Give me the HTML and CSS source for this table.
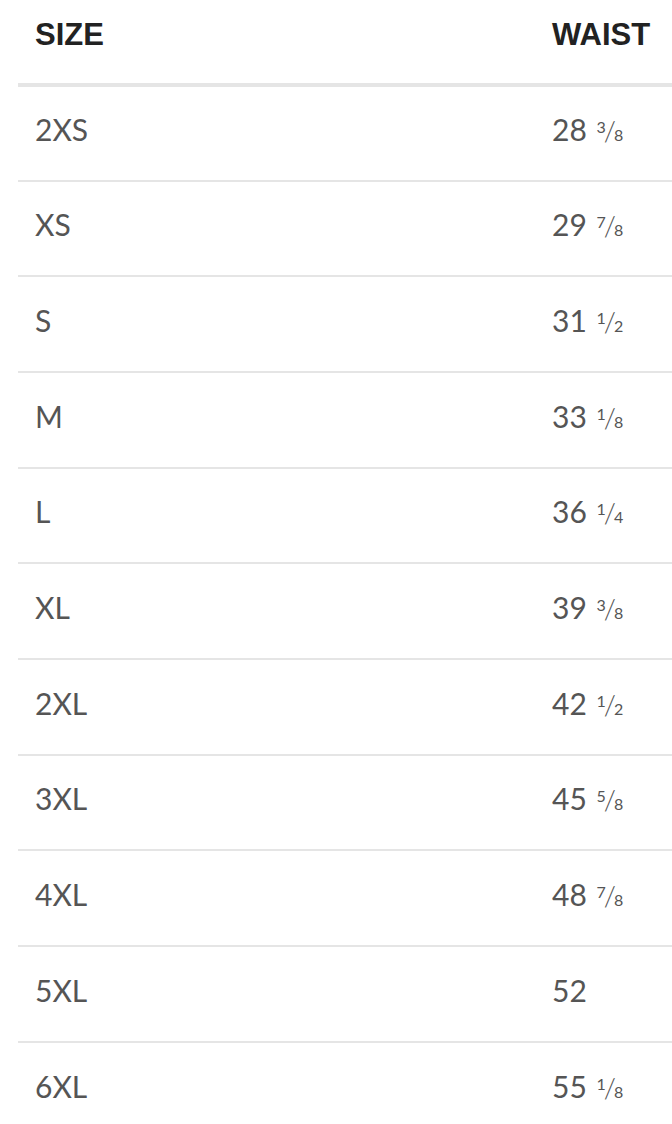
FILE: index.html
```html
<!DOCTYPE html>
<html lang="en">
<head>
    <meta charset="UTF-8">
    <meta name="viewport" content="width=device-width, initial-scale=1.0">
    <title>Size Chart</title>
    <link rel="stylesheet" href="styles.css">
</head>
<body>

    <!-- Size chart -->
    <table class="size-chart">
        <thead>
            <tr>
                <th>SIZE</th>
                <th class="waist-col">WAIST</th>
            </tr>
        </thead>
        <tbody>
            <tr><td>2XS</td><td class="waist-col">28 <span class="frac"><span class="num">3</span><span class="slash">/</span><span class="den">8</span></span></td></tr>
            <tr><td>XS</td><td class="waist-col">29 <span class="frac"><span class="num">7</span><span class="slash">/</span><span class="den">8</span></span></td></tr>
            <tr><td>S</td><td class="waist-col">31 <span class="frac"><span class="num">1</span><span class="slash">/</span><span class="den">2</span></span></td></tr>
            <tr><td>M</td><td class="waist-col">33 <span class="frac"><span class="num">1</span><span class="slash">/</span><span class="den">8</span></span></td></tr>
            <tr><td>L</td><td class="waist-col">36 <span class="frac"><span class="num">1</span><span class="slash">/</span><span class="den">4</span></span></td></tr>
            <tr><td>XL</td><td class="waist-col">39 <span class="frac"><span class="num">3</span><span class="slash">/</span><span class="den">8</span></span></td></tr>
            <tr><td>2XL</td><td class="waist-col">42 <span class="frac"><span class="num">1</span><span class="slash">/</span><span class="den">2</span></span></td></tr>
            <tr><td>3XL</td><td class="waist-col">45 <span class="frac"><span class="num">5</span><span class="slash">/</span><span class="den">8</span></span></td></tr>
            <tr><td>4XL</td><td class="waist-col">48 <span class="frac"><span class="num">7</span><span class="slash">/</span><span class="den">8</span></span></td></tr>
            <tr><td>5XL</td><td class="waist-col">52</td></tr>
            <tr><td>6XL</td><td class="waist-col">55 <span class="frac"><span class="num">1</span><span class="slash">/</span><span class="den">8</span></span></td></tr>
        </tbody>
    </table>

</body>
</html>
```

FILE: styles.css
```css
* {
    margin: 0;
    padding: 0;
    box-sizing: border-box;
}

body {
    background: #fff;
    padding-left: 18px;
    font-family: 'Lato', 'DejaVu Sans', sans-serif;
    color: #555;
}

.size-chart {
    width: 100%;
    border-collapse: collapse;
}

.size-chart th {
    height: 85px;
    padding: 0 0 14px 17px;
    text-align: left;
    font-family: 'Liberation Sans', Arial, sans-serif;
    font-size: 31px;
    font-weight: bold;
    color: #222;
    border-bottom: 4px solid #e5e5e5;
}

.size-chart td {
    height: 95.67px;
    padding: 0 0 8px 17px;
    font-size: 30px;
    font-weight: normal;
    border-bottom: 2px solid #e5e5e5;
}

.size-chart tbody tr:last-child td {
    border-bottom: none;
}

.size-chart .waist-col {
    width: 120px;
    padding-left: 0;
}

/* hand-built fraction: small numerator up, slash, small denominator */
.frac {
    margin-left: 2px;
}

.frac .num,
.frac .den {
    font-size: 16px;
}

.frac .num {
    vertical-align: 8px;
}

.frac .slash {
    font-size: 28px;
    font-weight: 300;
    margin: 0 -2px;
}
```
